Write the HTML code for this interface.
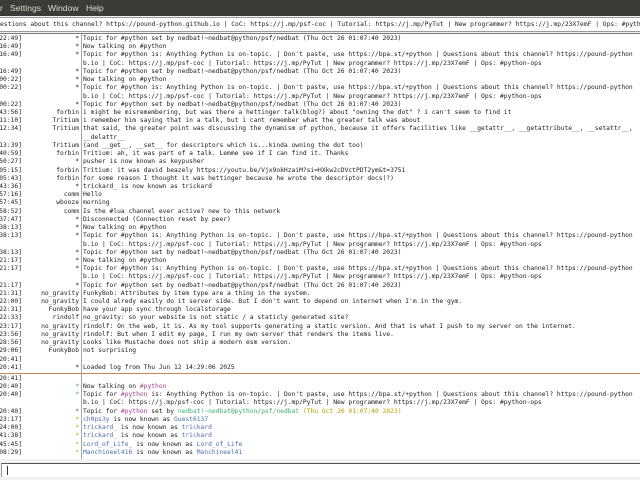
<!DOCTYPE html>
<html><head><meta charset="utf-8"><style>
body{margin:0;width:640px;height:480px;overflow:hidden;background:#f2f1f0;font-family:"DejaVu Sans Mono","Liberation Mono",monospace;position:relative}
#menu{position:absolute;left:0;top:0;width:640px;height:16px;background:#3c3b37;color:#dfdbd2;font:8.6px "Liberation Sans",sans-serif;line-height:16px}
#menu span{position:absolute;top:0}
#topic{position:absolute;left:-1px;top:17px;width:642px;height:13px;background:#fff;border:1px solid #9a9a9a;font-size:6.3px;line-height:13px;white-space:nowrap;overflow:hidden;color:#222}
#chat{position:absolute;left:0;top:33px;width:640px;height:425px;background:#fff;border-top:1px solid #7a7a7a;overflow:hidden}
#vsep{position:absolute;left:81px;top:0;width:1px;height:425px;background:#a8a8a8}
.r{position:absolute;left:0;width:640px;height:8.22px;line-height:8.22px;font-size:6.3px;white-space:nowrap;color:#222}
.t{position:absolute;right:618px}
.n{position:absolute;right:561px}
.m{position:absolute;left:83px}
.g{color:#3aa860}.p{color:#a0408f}.y{color:#b8a000}.o{color:#d0a020}.b{color:#4a6fb0}.ng{color:#3cb070}
#orange{position:absolute;left:0;top:339px;width:640px;height:1px;background:#c8855a}
#input{position:absolute;left:1px;top:463px;width:640px;height:13px;background:#fff;border-top:1px solid #555;border-left:1px solid #999}
#caret{position:absolute;left:5px;top:2px;width:1px;height:9px;background:#333}
</style></head><body>
<div id="menu"><span style="left:0">r</span><span style="left:10px">Settings</span><span style="left:48px">Window</span><span style="left:86px">Help</span></div>
<div id="topic">estions about this channel? https://pound-python.github.io | CoC: https://j.mp/psf-coc | Tutorial: https://j.mp/PyTut | New programmer? https://j.mp/23X7emF | Ops: #python-ops</div>
<div id="chat"><div id="vsep"></div><div id="orange"></div>
<div class="r" style="top:1px"><span class="t">22:49]</span><span class="n">*</span><span class="m">Topic for #python set by nedbat!~nedbat@python/psf/nedbat (Thu Oct 26 01:07:40 2023)</span></div>
<div class="r" style="top:9.22px"><span class="t">16:49]</span><span class="n">*</span><span class="m">Now talking on #python</span></div>
<div class="r" style="top:17.44px"><span class="t">16:49]</span><span class="n">*</span><span class="m">Topic for #python is: Anything Python is on-topic. | Don't paste, use https://bpa.st/+python | Questions about this channel? https://pound-python</span></div>
<div class="r" style="top:25.66px"><span class="m">b.io | CoC: https://j.mp/psf-coc | Tutorial: https://j.mp/PyTut | New programmer? https://j.mp/23X7emF | Ops: #python-ops</span></div>
<div class="r" style="top:33.88px"><span class="t">16:49]</span><span class="n">*</span><span class="m">Topic for #python set by nedbat!~nedbat@python/psf/nedbat (Thu Oct 26 01:07:40 2023)</span></div>
<div class="r" style="top:42.1px"><span class="t">00:22]</span><span class="n">*</span><span class="m">Now talking on #python</span></div>
<div class="r" style="top:50.32px"><span class="t">00:22]</span><span class="n">*</span><span class="m">Topic for #python is: Anything Python is on-topic. | Don't paste, use https://bpa.st/+python | Questions about this channel? https://pound-python</span></div>
<div class="r" style="top:58.54px"><span class="m">b.io | CoC: https://j.mp/psf-coc | Tutorial: https://j.mp/PyTut | New programmer? https://j.mp/23X7emF | Ops: #python-ops</span></div>
<div class="r" style="top:66.76px"><span class="t">00:22]</span><span class="n">*</span><span class="m">Topic for #python set by nedbat!~nedbat@python/psf/nedbat (Thu Oct 26 01:07:40 2023)</span></div>
<div class="r" style="top:74.98px"><span class="t">43:56]</span><span class="n">forbin</span><span class="m">i might be misremembering, but was there a hettinger talk(blog?) about "owning the dot" ? i can't seem to find it</span></div>
<div class="r" style="top:83.2px"><span class="t">11:10]</span><span class="n">Tritium</span><span class="m">i remember him saying that in a talk, but i cant remember what the greater talk was about</span></div>
<div class="r" style="top:91.42px"><span class="t">12:34]</span><span class="n">Tritium</span><span class="m">that said, the greater point was discussing the dynamism of python, because it offers facilities like __getattr__, __getattribute__, __setattr__,</span></div>
<div class="r" style="top:99.64px"><span class="m">__delattr__</span></div>
<div class="r" style="top:107.86px"><span class="t">13:39]</span><span class="n">Tritium</span><span class="m">(and __get__, __set__ for descriptors which is...kinda owning the dot too)</span></div>
<div class="r" style="top:116.08px"><span class="t">40:59]</span><span class="n">forbin</span><span class="m">Tritium: ah, it was part of a talk. Lemme see if I can find it. Thanks</span></div>
<div class="r" style="top:124.3px"><span class="t">50:27]</span><span class="n">*</span><span class="m">pusher is now known as keypusher</span></div>
<div class="r" style="top:132.52px"><span class="t">05:15]</span><span class="n">forbin</span><span class="m">Tritium: it was david beazely https://youtu.be/Vjx9okHzaiM?si=HXkw2cDVctPDT2ym&amp;t=3751</span></div>
<div class="r" style="top:140.74px"><span class="t">05:43]</span><span class="n">forbin</span><span class="m">for some reason I thought it was hettinger because he wrote the descriptor docs(?)</span></div>
<div class="r" style="top:148.96px"><span class="t">43:36]</span><span class="n">*</span><span class="m">trickard_ is now known as trickard</span></div>
<div class="r" style="top:157.18px"><span class="t">57:16]</span><span class="n">comm</span><span class="m">Hello</span></div>
<div class="r" style="top:165.4px"><span class="t">57:45]</span><span class="n">wbooze</span><span class="m">morning</span></div>
<div class="r" style="top:173.62px"><span class="t">58:52]</span><span class="n">comm</span><span class="m">Is the #lua channel ever active? new to this network</span></div>
<div class="r" style="top:181.84px"><span class="t">37:47]</span><span class="n">*</span><span class="m">Disconnected (Connection reset by peer)</span></div>
<div class="r" style="top:190.06px"><span class="t">38:13]</span><span class="n">*</span><span class="m">Now talking on #python</span></div>
<div class="r" style="top:198.28px"><span class="t">38:13]</span><span class="n">*</span><span class="m">Topic for #python is: Anything Python is on-topic. | Don't paste, use https://bpa.st/+python | Questions about this channel? https://pound-python</span></div>
<div class="r" style="top:206.5px"><span class="m">b.io | CoC: https://j.mp/psf-coc | Tutorial: https://j.mp/PyTut | New programmer? https://j.mp/23X7emF | Ops: #python-ops</span></div>
<div class="r" style="top:214.72px"><span class="t">38:13]</span><span class="n">*</span><span class="m">Topic for #python set by nedbat!~nedbat@python/psf/nedbat (Thu Oct 26 01:07:40 2023)</span></div>
<div class="r" style="top:222.94px"><span class="t">21:17]</span><span class="n">*</span><span class="m">Now talking on #python</span></div>
<div class="r" style="top:231.16px"><span class="t">21:17]</span><span class="n">*</span><span class="m">Topic for #python is: Anything Python is on-topic. | Don't paste, use https://bpa.st/+python | Questions about this channel? https://pound-python</span></div>
<div class="r" style="top:239.38px"><span class="m">b.io | CoC: https://j.mp/psf-coc | Tutorial: https://j.mp/PyTut | New programmer? https://j.mp/23X7emF | Ops: #python-ops</span></div>
<div class="r" style="top:247.6px"><span class="t">21:17]</span><span class="n">*</span><span class="m">Topic for #python set by nedbat!~nedbat@python/psf/nedbat (Thu Oct 26 01:07:40 2023)</span></div>
<div class="r" style="top:255.82px"><span class="t">21:31]</span><span class="n">no_gravity</span><span class="m">FunkyBob: Attributes by item type are a thing in the system.</span></div>
<div class="r" style="top:264.04px"><span class="t">22:00]</span><span class="n">no_gravity</span><span class="m">I could alredy easily do it server side. But I don't want to depend on internet when I'm in the gym.</span></div>
<div class="r" style="top:272.26px"><span class="t">22:31]</span><span class="n">FunkyBob</span><span class="m">have your app sync through localstorage</span></div>
<div class="r" style="top:280.48px"><span class="t">22:33]</span><span class="n">rindolf</span><span class="m">no_gravity: so your website is not static / a staticly generated site?</span></div>
<div class="r" style="top:288.7px"><span class="t">23:17]</span><span class="n">no_gravity</span><span class="m">rindolf: On the web, it is. As my tool supports generating a static version. And that is what I push to my server on the internet.</span></div>
<div class="r" style="top:296.92px"><span class="t">23:56]</span><span class="n">no_gravity</span><span class="m">rindolf: But when I edit my page, I run my own server that renders the items live.</span></div>
<div class="r" style="top:305.14px"><span class="t">28:56]</span><span class="n">no_gravity</span><span class="m">Looks like Mustache does not ship a modern esm version.</span></div>
<div class="r" style="top:313.36px"><span class="t">29:06]</span><span class="n">FunkyBob</span><span class="m">not surprising</span></div>
<div class="r" style="top:321.58px"><span class="t">20:41]</span></div>
<div class="r" style="top:329.8px"><span class="t">20:41]</span><span class="n">*</span><span class="m">Loaded log from Thu Jun 12 14:29:06 2025</span></div>
<div class="r" style="top:340.5px"><span class="t">20:41]</span></div>
<div class="r" style="top:349px"><span class="t">20:40]</span><span class="n g">*</span><span class="m">Now talking on <span class="p">#python</span></span></div>
<div class="r" style="top:357.22px"><span class="t">20:40]</span><span class="n g">*</span><span class="m">Topic for <span class="p">#python</span> is: Anything Python is on-topic. | Don't paste, use https://bpa.st/+python | Questions about this channel? https://pound-python</span></div>
<div class="r" style="top:365.44px"><span class="m">b.io | CoC: https://j.mp/psf-coc | Tutorial: https://j.mp/PyTut | New programmer? https://j.mp/23X7emF | Ops: #python-ops</span></div>
<div class="r" style="top:373.66px"><span class="t">20:40]</span><span class="n p">*</span><span class="m">Topic for <span class="p">#python</span> set by <span class="ng">nedbat!~nedbat@python/psf/nedbat</span> <span class="y">(Thu Oct 26 01:07:40 2023)</span></span></div>
<div class="r" style="top:381.88px"><span class="t">23:17]</span><span class="n o">*</span><span class="m"><span class="b">ch0ps3y</span> is now known as <span class="b">Guest6137</span></span></div>
<div class="r" style="top:390.1px"><span class="t">24:00]</span><span class="n o">*</span><span class="m"><span class="b">trickard_</span> is now known as <span class="b">trickard</span></span></div>
<div class="r" style="top:398.32px"><span class="t">41:38]</span><span class="n o">*</span><span class="m"><span class="b">trickard_</span> is now known as <span class="b">trickard</span></span></div>
<div class="r" style="top:406.54px"><span class="t">45:45]</span><span class="n o">*</span><span class="m"><span class="b">Lord_of_Life_</span> is now known as <span class="b">Lord_of_Life</span></span></div>
<div class="r" style="top:414.76px"><span class="t">08:29]</span><span class="n o">*</span><span class="m"><span class="b">Manchineel416</span> is now known as <span class="b">Manchineel41</span></span></div>
</div>
<div id="input"><div id="caret"></div></div>
</body></html>
